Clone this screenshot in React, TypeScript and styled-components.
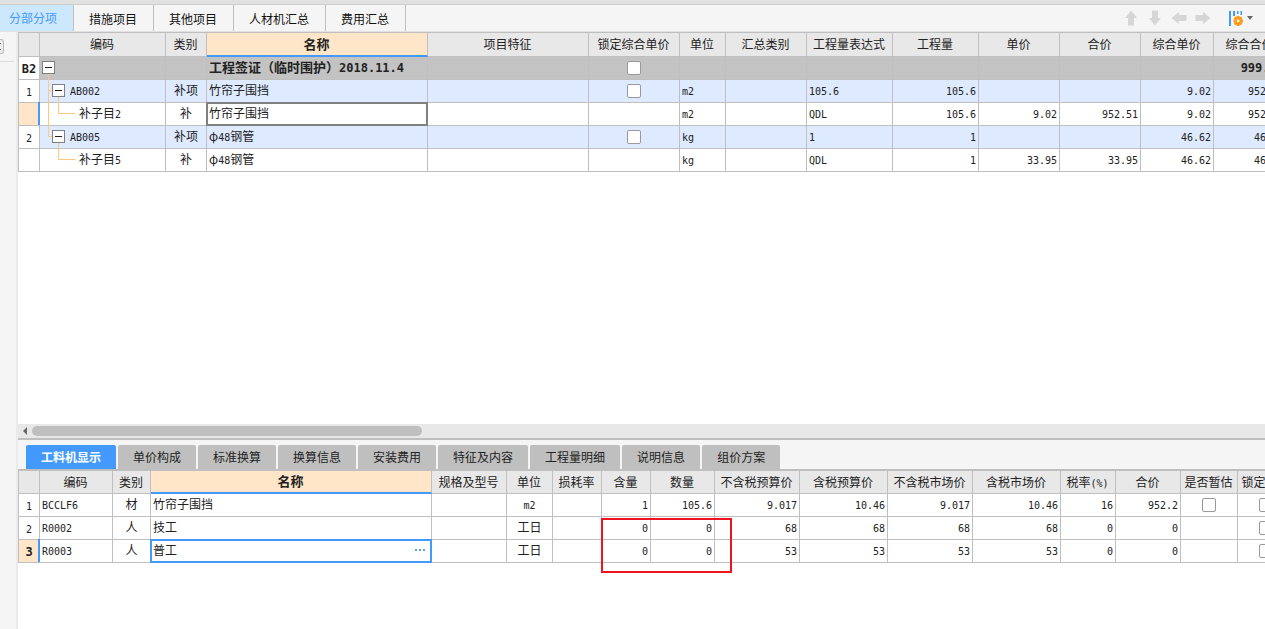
import React from "react";
import styled, { createGlobalStyle, css } from "styled-components";

const color = {
  line: "#bfbfbf",
  blue: "#4499ff",
  orange: "#ffc880",
  peach: "#ffe6c8",
  text: "#222222",
  panel: "#f5f5f5",
  header: "#e8e8e8",
};

const GlobalStyle = createGlobalStyle`
  * { box-sizing: border-box; }
  body {
    margin: 0;
    overflow: hidden;
    background: #fff;
    color: ${color.text};
    font: 12px/20px "Noto Sans CJK SC", sans-serif;
  }
  button, input { font: inherit; color: inherit; }
`;

const Page = styled.div`
  display: flex;
  flex-direction: column;
  min-height: 100vh;
`;

const TopBar = styled.header`
  display: flex;
  justify-content: space-between;
  height: 32px;
  border-bottom: 1px solid #e2e2e2;
  background: ${color.panel};
  overflow: hidden;
`;

const TopFrame = styled.div`
  height: 5px;
  margin-bottom: -5px;
  background: #e1e1e1;
  border-bottom: 1px solid #cecece;
  z-index: 1;
`;

const MainTabs = styled.nav`
  display: flex;
  margin-left: -6px;
  padding-top: 5px;
`;

const MainTab = styled.button<{ $active?: boolean }>`
  border: 0;
  border-right: 1px solid ${color.line};
  padding: ${(p) => (p.$active ? "0 16px 0 15px" : "2px 16px 0 15px")};
  background: ${(p) => (p.$active ? "#cce8ff" : "transparent")};
  color: ${(p) => (p.$active ? color.blue : "#111")};
  white-space: nowrap;
`;

const Tools = styled.div`
  display: flex;
  align-items: center;
  padding: 5px 12px 0 0;
`;

const ToolButton = styled.button`
  display: flex;
  align-items: center;
  justify-content: center;
  width: 24px;
  height: 24px;
  padding: 0;
  border: 0;
  background: none;
`;

const SettingsButton = styled(ToolButton)`
  width: 38px;
  gap: 4px;
  justify-content: flex-end;
`;

const Body = styled.div`
  display: flex;
  flex: 1;
`;

const SideRail = styled.aside`
  flex: 0 0 18px;
  border-right: 2px solid #ebebeb;
  background: ${color.panel};
`;

const RailHead = styled.div`
  width: 14px;
  height: 30px;
  padding-top: 7px;
  border-bottom: 1px solid #dcdcdc;
`;

const RailButton = styled.button`
  display: flex;
  align-items: center;
  justify-content: flex-start;
  width: 4px;
  height: 15px;
  padding: 0;
  border: 1px solid #bbb;
  border-left: 0;
  border-radius: 0 3px 3px 0;
  background: #eee;
`;

const Workspace = styled.main`
  display: flex;
  flex: 1;
  flex-direction: column;
  min-width: 0;
`;

const UpperPane = styled.section`
  flex: 1;
  overflow: hidden;
  border-top: 1px solid ${color.line};
`;

const LowerPane = styled.section`
  position: relative;
  min-height: 158px;
  overflow: hidden;
`;

const ScrollBar = styled.div`
  display: flex;
  align-items: center;
  height: 16px;
  padding-left: 4px;
  gap: 4px;
  border-bottom: 2px solid ${color.line};
  background: ${color.header};
`;

const ScrollThumb = styled.div`
  width: 390px;
  height: 10px;
  border-radius: 5px;
  background: ${color.line};
`;

const DetailTabs = styled.nav`
  display: flex;
  gap: 2px;
  height: 31px;
  padding: 5px 8px 0;
  border-bottom: 2px solid ${color.line};
  background: ${color.panel};
`;

const DetailTab = styled.button<{ $active?: boolean }>`
  padding: 0 15px;
  border: 0;
  border-radius: 2px 2px 0 0;
  background: ${(p) => (p.$active ? color.blue : color.line)};
  color: ${(p) => (p.$active ? "#fff" : color.text)};
  font-weight: ${(p) => (p.$active ? 700 : 400)};
  white-space: nowrap;
`;

const Grid = styled.table`
  width: 0;
  table-layout: fixed;
  border-collapse: separate;
  border-spacing: 0;
  border-left: 1px solid ${color.line};
`;

const HeadCell = styled.th<{ $current?: boolean; $tall?: boolean }>`
  height: ${(p) => (p.$tall ? 24 : 23)}px;
  padding: 0 1px 1px 0;
  border-right: 1px solid ${color.line};
  border-bottom: 1px solid ${color.line};
  background: ${color.header};
  font-weight: 400;
  line-height: 20px;
  white-space: nowrap;
  ${(p) =>
    p.$current &&
    css`
      border-bottom: 2px solid ${color.blue};
      background: ${color.peach};
      font-size: 13px;
      font-weight: 700;
    `}
`;

type Align = "left" | "center" | "right";

const Row = styled.tr<{ $tone?: "group" | "item" }>`
  background: ${(p) =>
    p.$tone === "group" ? "#c3c3c3" : p.$tone === "item" ? "#deeaff" : "#fff"};
  font-size: ${(p) => (p.$tone === "group" ? 13 : 12)}px;
  font-weight: ${(p) => (p.$tone === "group" ? 700 : 400)};
`;

const Cell = styled.td<{ $align?: Align; $outline?: string }>`
  height: 23px;
  padding: 0 2px 1px;
  border-right: 1px solid ${color.line};
  border-bottom: 1px solid ${color.line};
  line-height: 20px;
  text-align: ${(p) => p.$align ?? "left"};
  vertical-align: top;
  white-space: nowrap;
  ${(p) =>
    p.$outline &&
    css`
      position: relative;
      &::after {
        content: "";
        position: absolute;
        inset: -1px;
        border: 2px solid ${p.$outline};
        pointer-events: none;
      }
    `}
`;

const RowNumber = styled.th<{ $current?: boolean; $bold?: boolean }>`
  height: 23px;
  padding: 1px 0 0;
  border-right: 1px solid ${color.line};
  border-bottom: 1px solid ${color.line};
  background: ${(p) => (p.$current ? color.peach : "#fff")};
  font-size: 12px;
  font-weight: ${(p) => (p.$bold ? 700 : 400)};
  line-height: 20px;
  vertical-align: top;
  ${(p) =>
    p.$current &&
    css`
      position: relative;
      &::after {
        content: "";
        position: absolute;
        top: -1px;
        right: -1px;
        bottom: 0;
        width: 2px;
        background: ${color.blue};
      }
    `}
`;

const Latin = styled.span<{ $bold?: boolean }>`
  font-family: "DejaVu Sans Mono", "Noto Sans CJK SC", monospace;
  font-size: ${(p) => (p.$bold ? 12 : 10)}px;
  line-height: 0;
`;

const Check = styled.input.attrs({ type: "checkbox" })`
  appearance: none;
  display: block;
  width: 14px;
  height: 14px;
  margin: 4px auto 0;
  border: 1px solid #999;
  border-radius: 2px;
  background: #fff;
`;

const TreeLine = styled.div`
  position: relative;
  display: flex;
  align-items: flex-start;
  height: 21px;
  margin: 0 -2px;
`;

const TreeGuide = styled.svg`
  position: absolute;
  top: 0;
  left: 0;
  overflow: visible;
`;

const TreeToggle = styled.button<{ $level: number }>`
  position: relative;
  display: flex;
  align-items: center;
  justify-content: center;
  width: 13px;
  height: 13px;
  margin: 4px 5px 0 ${(p) => 2 + p.$level * 10}px;
  padding: 0;
  border: 1px solid #808080;
  background: #fff;
`;

const TreeLabel = styled.span<{ $leaf?: boolean }>`
  margin-left: ${(p) => (p.$leaf ? 39 : 0)}px;
`;

const NameEditor = styled.div`
  display: flex;
  align-items: center;
  height: 20px;
`;

const NameInput = styled.input`
  flex: 1;
  min-width: 0;
  height: 20px;
  padding: 0;
  border: 0;
  outline: 0;
  background: transparent;
`;

const MoreButton = styled.button`
  display: flex;
  align-items: center;
  width: 14px;
  height: 18px;
  margin-right: 1px;
  padding: 0;
  border: 0;
  background: none;
`;

const HighlightBox = styled.div`
  position: absolute;
  top: 47px;
  left: 583px;
  width: 131px;
  height: 55px;
  border: 2px solid #ed1420;
  pointer-events: none;
`;

function Text({ children, bold }: { children: string; bold?: boolean }) {
  const runs = children.split(/([\x21-\x7e]+)/).filter(Boolean);
  return (
    <>
      {runs.map((run, i) =>
        /^[\x21-\x7e]/.test(run) ? (
          <Latin key={i} $bold={bold}>
            {run}
          </Latin>
        ) : (
          run
        )
      )}
    </>
  );
}

const arrowRotation = { up: 0, right: 90, down: 180, left: 270 };

function ArrowIcon({ dir }: { dir: keyof typeof arrowRotation }) {
  return (
    <svg width="16" height="16" viewBox="0 0 16 16" aria-hidden="true">
      <path
        d="M8 .5 14 8h-3v7.500H5V8H2z"
        fill="#d6d6d6"
        transform={`rotate(${arrowRotation[dir]} 8 8)`}
      />
    </svg>
  );
}

function SettingsIcon() {
  return (
    <svg width="14" height="16" viewBox="0 0 14 16" aria-hidden="true">
      <path d="M0 1h2v15H0zM4 1h2v5H4zM8 1h1.500v3H8zM11.500 1H13v4h-1.500z" fill={color.blue} />
      <path
        d="M7.500 6h3.200v1.200L12 6.600l1.400 1.700-.8 1.100H14v3h-1.400l.8 1.100-1.400 1.700-1.300-.7V16H7.500v-1.500l-1.300.7-1.400-1.700.8-1.100H4.500v-3h1.100l-.8-1.100 1.400-1.700 1.300.6zM9.100 9.500a1.400 1.400 0 1 0 0 2.800 1.400 1.400 0 0 0 0-2.800z"
        fill="#ff9c1a"
        fillRule="evenodd"
      />
    </svg>
  );
}

const guidePaths = {
  root: "M8.500 17v6",
  branch: "M8.500 0v23M8.500 10.500h4M18.500 17v6",
  lastBranch: "M8.500 0v10.500h4M18.500 17v6",
  leaf: "M8.500 0v23M18.500 0v10.500h17",
  lastLeaf: "M18.500 0v10.500h17",
};

interface Item {
  no: string;
  guide: keyof typeof guidePaths;
  level: number;
  code: string;
  kind: string;
  name: string;
  lockable?: boolean;
  unit: string;
  values: string[];
  tone?: "group" | "item";
  current?: boolean;
}

const items: Item[] = [
  { no: "B2", guide: "root", level: 0, code: "", kind: "", name: "工程签证（临时围护）2018.11.4", lockable: true, unit: "", values: ["", "", "", "", "", "999.13"], tone: "group" },
  { no: "1", guide: "branch", level: 1, code: "AB002", kind: "补项", name: "竹帘子围挡", lockable: true, unit: "m2", values: ["105.6", "105.6", "", "", "9.02", "952.51"], tone: "item" },
  { no: "", guide: "leaf", level: 2, code: "补子目2", kind: "补", name: "竹帘子围挡", unit: "m2", values: ["QDL", "105.6", "9.02", "952.51", "9.02", "952.51"], current: true },
  { no: "2", guide: "lastBranch", level: 1, code: "AB005", kind: "补项", name: "φ48钢管", lockable: true, unit: "kg", values: ["1", "1", "", "", "46.62", "46.62"], tone: "item" },
  { no: "", guide: "lastLeaf", level: 2, code: "补子目5", kind: "补", name: "φ48钢管", unit: "kg", values: ["QDL", "1", "33.95", "33.95", "46.62", "46.62"] },
];

const itemColumns: [string, number][] = [
  ["", 21], ["编码", 126], ["类别", 41], ["名称", 221], ["项目特征", 161],
  ["锁定综合单价", 91], ["单位", 46], ["汇总类别", 81], ["工程量表达式", 86],
  ["工程量", 86], ["单价", 81], ["合价", 81], ["综合单价", 73], ["综合合价", 73],
];

const resourceColumns: [string, number][] = [
  ["", 21], ["编码", 73], ["类别", 38], ["名称", 281], ["规格及型号", 75],
  ["单位", 46], ["损耗率", 49], ["含量", 49], ["数量", 64], ["不含税预算价", 85],
  ["含税预算价", 88], ["不含税市场价", 85], ["含税市场价", 88], ["税率(%)", 55],
  ["合价", 65], ["是否暂估", 57], ["锁定数量", 57],
];

const resources = [
  { code: "BCCLF6", kind: "材", name: "竹帘子围挡", unit: "m2", values: ["1", "105.6", "9.017", "10.46", "9.017", "10.46", "16", "952.2"], estimate: true },
  { code: "R0002", kind: "人", name: "技工", unit: "工日", values: ["0", "0", "68", "68", "68", "68", "0", "0"] },
  { code: "R0003", kind: "人", name: "普工", unit: "工日", values: ["0", "0", "53", "53", "53", "53", "0", "0"], current: true },
];

function GridHead({ columns, tall }: { columns: [string, number][]; tall?: boolean }) {
  return (
    <>
      <colgroup>
        {columns.map(([, width], i) => (
          <col key={i} width={width} />
        ))}
      </colgroup>
      <thead>
        <tr>
          {columns.map(([label], i) => (
            <HeadCell key={i} scope="col" $current={label === "名称"} $tall={tall}>
              <Text>{label}</Text>
            </HeadCell>
          ))}
        </tr>
      </thead>
    </>
  );
}

function ItemRow({ item }: { item: Item }) {
  const bold = item.tone === "group";
  const leaf = item.level === 2;
  return (
    <Row $tone={item.tone}>
      <RowNumber scope="row" $current={item.current} $bold={bold}>
        <Text bold={bold}>{item.no}</Text>
      </RowNumber>
      <Cell>
        <TreeLine>
          <TreeGuide width="38" height="21" aria-hidden="true">
            <path d={guidePaths[item.guide]} fill="none" stroke={color.orange} />
          </TreeGuide>
          {!leaf && (
            <TreeToggle $level={item.level} aria-label={`折叠 ${item.code || item.name}`}>
              <svg width="7" height="1" aria-hidden="true">
                <path d="M0 0h7v1H0z" fill="#222" />
              </svg>
            </TreeToggle>
          )}
          <TreeLabel $leaf={leaf}>
            <Text>{item.code}</Text>
          </TreeLabel>
        </TreeLine>
      </Cell>
      <Cell $align="center">{item.kind}</Cell>
      <Cell $outline={item.current ? "#808080" : undefined}>
        <Text bold={bold}>{item.name}</Text>
      </Cell>
      <Cell />
      <Cell>{item.lockable && <Check aria-label={`锁定综合单价 ${item.name}`} />}</Cell>
      <Cell>
        <Text>{item.unit}</Text>
      </Cell>
      <Cell />
      {item.values.map((value, i) => (
        <Cell key={i} $align={i === 0 ? "left" : "right"}>
          <Text bold={bold}>{value}</Text>
        </Cell>
      ))}
    </Row>
  );
}

export default function App() {
  return (
    <Page>
      <GlobalStyle />
      <TopFrame />
      <TopBar>
        <MainTabs aria-label="项目">
          {["分部分项", "措施项目", "其他项目", "人材机汇总", "费用汇总"].map((label, i) => (
            <MainTab key={label} $active={i === 0}>
              {label}
            </MainTab>
          ))}
        </MainTabs>
        <Tools>
          <ToolButton aria-label="上移"><ArrowIcon dir="up" /></ToolButton>
          <ToolButton aria-label="下移"><ArrowIcon dir="down" /></ToolButton>
          <ToolButton aria-label="左移"><ArrowIcon dir="left" /></ToolButton>
          <ToolButton aria-label="右移"><ArrowIcon dir="right" /></ToolButton>
          <SettingsButton aria-label="设置">
            <SettingsIcon />
            <svg width="6" height="4" aria-hidden="true">
              <path d="M0 0h6L3 4z" fill="#666" />
            </svg>
          </SettingsButton>
        </Tools>
      </TopBar>
      <Body>
        <SideRail>
          <RailHead>
            <RailButton aria-label="展开">
              <svg width="1" height="9" aria-hidden="true">
                <path d="M0 1h1v1H0zM0 7h1v1H0z" fill="#666" />
              </svg>
            </RailButton>
          </RailHead>
        </SideRail>
        <Workspace>
          <UpperPane>
            <Grid>
              <GridHead columns={itemColumns} tall />
              <tbody>
                {items.map((item, i) => (
                  <ItemRow key={i} item={item} />
                ))}
              </tbody>
            </Grid>
          </UpperPane>
          <ScrollBar>
            <svg width="6" height="8" aria-hidden="true">
              <path d="M5 0v8L1 4z" fill="#666" />
            </svg>
            <ScrollThumb />
          </ScrollBar>
          <DetailTabs aria-label="明细">
            {["工料机显示", "单价构成", "标准换算", "换算信息", "安装费用", "特征及内容", "工程量明细", "说明信息", "组价方案"].map((label, i) => (
              <DetailTab key={label} $active={i === 0}>
                {label}
              </DetailTab>
            ))}
          </DetailTabs>
          <LowerPane>
            <Grid>
              <GridHead columns={resourceColumns} />
              <tbody>
                {resources.map((r, i) => (
                  <Row key={r.code}>
                    <RowNumber scope="row" $current={r.current} $bold={r.current}>
                      <Text bold={r.current}>{String(i + 1)}</Text>
                    </RowNumber>
                    <Cell>
                      <Text>{r.code}</Text>
                    </Cell>
                    <Cell $align="center">{r.kind}</Cell>
                    <Cell $outline={r.current ? color.blue : undefined}>
                      {r.current ? (
                        <NameEditor>
                          <NameInput aria-label="名称" defaultValue={r.name} />
                          <MoreButton aria-label="更多">
                            <svg width="12" height="2" aria-hidden="true">
                              <path d="M1 0h2v2H1zM5 0h2v2H5zM9 0h2v2H9z" fill="#5fa3d9" />
                            </svg>
                          </MoreButton>
                        </NameEditor>
                      ) : (
                        r.name
                      )}
                    </Cell>
                    <Cell />
                    <Cell $align="center">
                      <Text>{r.unit}</Text>
                    </Cell>
                    <Cell />
                    {r.values.map((value, j) => (
                      <Cell key={j} $align="right">
                        <Text>{value}</Text>
                      </Cell>
                    ))}
                    <Cell>{r.estimate && <Check aria-label={`是否暂估 ${r.name}`} />}</Cell>
                    <Cell>
                      <Check aria-label={`锁定数量 ${r.name}`} />
                    </Cell>
                  </Row>
                ))}
              </tbody>
            </Grid>
            <HighlightBox />
          </LowerPane>
        </Workspace>
      </Body>
    </Page>
  );
}
